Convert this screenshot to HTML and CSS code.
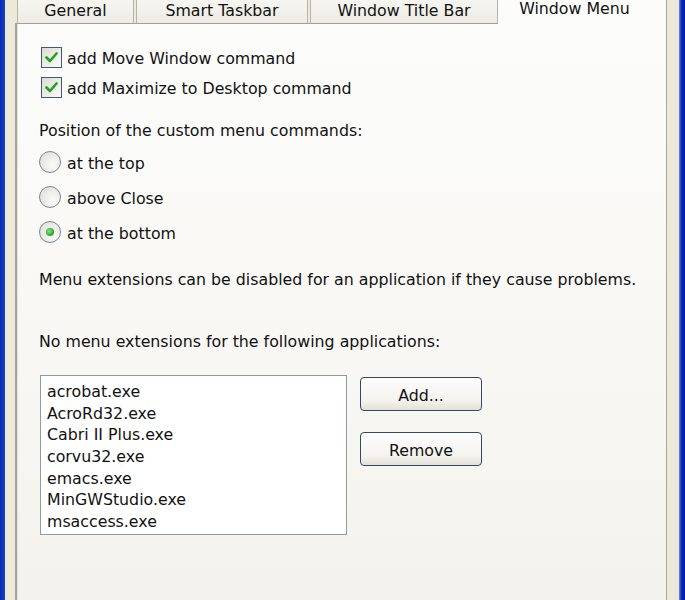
FILE: index.html
```html
<!DOCTYPE html>
<html>
<head>
<meta charset="utf-8">
<link rel="stylesheet" href="styles.css">
</head>
<body>
<div class="frame">
  <div class="edge edge-left"></div>
  <div class="client">
    <div class="sheet">
      <div class="tabrow">
        <div class="tabs-inactive">
          <div class="tab tab-general">General</div>
          <div class="tab tab-smart">Smart Taskbar</div>
          <div class="tab tab-title">Window Title Bar</div>
        </div>
        <div class="tab-active">Window Menu</div>
        <div class="tab-filler"></div>
      </div>
      <div class="body">
        <label class="row check-row"><span class="checkbox"><svg width="13" height="11" viewBox="0 0 13 11"><path d="M1.5 5.5 L5 9 L11.5 1.5" fill="none" stroke="#21a121" stroke-width="2.6" stroke-linecap="round" stroke-linejoin="round"/></svg></span><span class="txt">add Move Window command</span></label>
        <label class="row check-row"><span class="checkbox"><svg width="13" height="11" viewBox="0 0 13 11"><path d="M1.5 5.5 L5 9 L11.5 1.5" fill="none" stroke="#21a121" stroke-width="2.6" stroke-linecap="round" stroke-linejoin="round"/></svg></span><span class="txt">add Maximize to Desktop command</span></label>
        <div class="row label-row"><span class="txt">Position of the custom menu commands:</span></div>
        <label class="row radio-row"><span class="radio"></span><span class="txt">at the top</span></label>
        <label class="row radio-row"><span class="radio"></span><span class="txt">above Close</span></label>
        <label class="row radio-row"><span class="radio checked"><span class="dot"></span></span><span class="txt">at the bottom</span></label>
        <div class="row note-row"><span class="txt">Menu extensions can be disabled for an application if they cause problems.</span></div>
        <div class="row list-label"><span class="txt">No menu extensions for the following applications:</span></div>
        <div class="list-area">
          <div class="listbox">
            <div class="item">acrobat.exe</div>
            <div class="item">AcroRd32.exe</div>
            <div class="item">Cabri II Plus.exe</div>
            <div class="item">corvu32.exe</div>
            <div class="item">emacs.exe</div>
            <div class="item">MinGWStudio.exe</div>
            <div class="item">msaccess.exe</div>
          </div>
          <div class="buttons">
            <div class="btn"><span class="txt">Add...</span></div>
            <div class="btn"><span class="txt">Remove</span></div>
          </div>
        </div>
      </div>
    </div>
  </div>
  <div class="edge edge-right"></div>
</div>
</body>
</html>
```
FILE: styles.css
```css
html, body {
  margin: 0;
  padding: 0;
}
body {
  width: 685px;
  height: 600px;
  overflow: hidden;
  background: #ece9d8;
  font-family: "DejaVu Sans", "Liberation Sans", sans-serif;
  font-size: 15.8px;
  color: #111;
}
.frame {
  display: flex;
  height: 600px;
}
.edge {
  flex: none;
}
.edge-left {
  width: 5px;
  background: linear-gradient(to right, #0a2aa8, #1640d0);
}
.edge-right {
  width: 6px;
  background: linear-gradient(to right, #6d8df0, #0a2ab8 40%, #001a9a);
}
.client {
  flex: 1;
  padding: 0 12px 0 10px;
  background: #ece9d8;
  display: flex;
  flex-direction: column;
}
.sheet {
  flex: 1;
  display: flex;
  flex-direction: column;
  border-right: 1px solid #a7a6a0;
  box-shadow: inset -1px 0 0 #d8d6cc;
}
.tabrow {
  display: flex;
  height: 24px;
  flex: none;
}
.tabs-inactive {
  display: flex;
  gap: 2px;
  padding-left: 2px;
  border-bottom: 1px solid #a0a09c;
  background: #ece9d8;
  height: 23px;
}
.tab {
  height: 23px;
  line-height: 22px;
  text-align: center;
  border: 1px solid #b4b4ae;
  border-top: none;
  border-bottom: none;
  background: linear-gradient(#f6f5f0, #ecebe4);
  box-sizing: border-box;
}
.tab-general { width: 117px; }
.tab-smart { width: 172px; }
.tab-title { width: 188px; }
.tab-active {
  width: 153px;
  height: 24px;
  line-height: 18px;
  text-align: center;
  background: #fcfcfb;
}
.tab-filler {
  flex: 1;
  background: #fcfcfb;
}
.body {
  flex: 1;
  border-left: 2px solid #a4a39e;
  box-shadow: inset 1px 0 0 #e4e2d8;
  background: linear-gradient(#fcfcfb, #f8f7f3 60%, #f3f2ec);
  padding: 18px 0 0 23px;
  display: flex;
  flex-direction: column;
}
.row {
  display: flex;
  align-items: center;
}
.txt {
  padding-top: 3px;
}
.check-row {
  height: 30px;
}
.checkbox {
  width: 19px;
  height: 19px;
  border: 1px solid #3d5b6f;
  background: linear-gradient(135deg, #dcdcd6, #fafaf8);
  margin-left: 1px;
  margin-right: 5px;
  display: flex;
  align-items: center;
  justify-content: center;
  flex: none;
}
.label-row {
  height: 30px;
  margin-top: 12px;
  margin-left: -1px;
}
.radio-row {
  height: 35px;
}
.radio {
  border: 1px solid #7c8690;
  border-radius: 50%;
  background: radial-gradient(circle at 65% 65%, #fafaf8, #dcdcd6);
  margin-left: -1px;
  margin-right: 6px;
  display: flex;
  align-items: center;
  justify-content: center;
  flex: none;
  box-sizing: border-box;
  width: 22px;
  height: 22px;
}
.dot {
  width: 8px;
  height: 8px;
  border-radius: 50%;
  background: radial-gradient(circle at 40% 40%, #8ee08e, #21a121 70%);
}
.note-row {
  height: 30px;
  margin-top: 14px;
  margin-left: -1px;
}
.list-label {
  height: 30px;
  margin-top: 32px;
  margin-left: -1px;
}
.list-area {
  display: flex;
  gap: 13px;
  margin-top: 20px;
  align-items: flex-start;
}
.listbox {
  width: 307px;
  height: 160px;
  box-sizing: border-box;
  border: 1px solid #8e9aa6;
  background: #fff;
  padding: 5px 0 0 6px;
  line-height: 21.67px;
}
.buttons {
  display: flex;
  flex-direction: column;
  gap: 21px;
  padding-top: 2px;
}
.btn {
  width: 122px;
  height: 34px;
  box-sizing: border-box;
  border: 1px solid #2f4a62;
  border-radius: 4px;
  background: linear-gradient(#fefefe, #f4f3ee 70%, #e3e1d6);
  display: flex;
  align-items: center;
  justify-content: center;
}
```
